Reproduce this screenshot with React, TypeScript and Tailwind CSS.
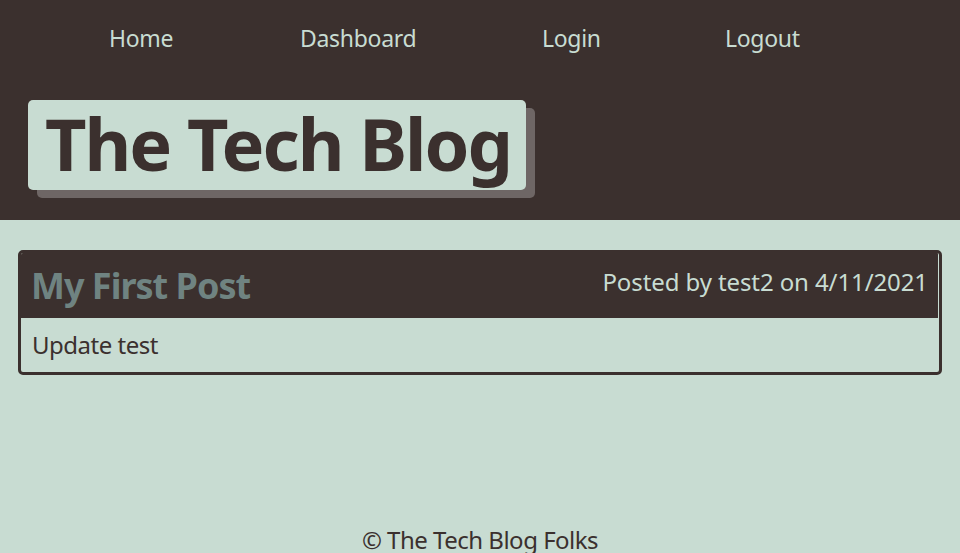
import React from 'react';

const navLinks = [
  { label: 'Home', width: 'w-[191px]' },
  { label: 'Dashboard', width: 'w-[242px]' },
  { label: 'Login', width: 'w-[183px]' },
  { label: 'Logout', width: '' },
];

export default function App() {
  return (
    <div className="h-[553px] overflow-hidden flex flex-col bg-[#c8dcd2] text-[#3b302e] font-['Noto_Sans',sans-serif]">
      <header className="bg-[#3b302e] pt-[21px] pb-[30px]">
        <nav className="flex pl-[109px] text-[23px] leading-[35px] tracking-[-0.3px] text-[#c8dcd2]">
          {navLinks.map(link => (
            <a key={link.label} href="#" className={link.width}>{link.label}</a>
          ))}
        </nav>
        <div className="mt-[44px] ml-[28px] inline-block rounded-[5px] bg-[#c8dcd2] h-[90px] pl-[17px] pr-[15px] pt-[7px] shadow-[9px_8px_0_#6e6665]">
          <h1 className="text-[72px] leading-none font-bold tracking-[-2px] text-[#3b302e]">The Tech Blog</h1>
        </div>
      </header>

      <main className="flex-1 px-[18px] pt-[30px]">
        <article className="border-[3px] border-[#3b302e] rounded-[5px] overflow-hidden">
          <div className="bg-[#3b302e] h-[65px] flex justify-between items-start px-[10px] mr-[1px]">
            <h2 className="pt-[15px] text-[36px] leading-none font-bold tracking-[-1px] text-[#6f8381]">My First Post</h2>
            <p className="pt-[17px] text-[24px] leading-none tracking-[-0.1px] text-[#c8dcd2]">Posted by test2 on 4/11/2021</p>
          </div>
          <div className="px-[11px] pt-[15px] pb-[15px] text-[24px] leading-none tracking-[-0.5px]">
            <p>Update test</p>
          </div>
        </article>
      </main>

      <footer className="h-[31px] text-center text-[24px] leading-[36px] tracking-[-0.5px]">
        © The Tech Blog Folks
      </footer>
    </div>
  );
}
